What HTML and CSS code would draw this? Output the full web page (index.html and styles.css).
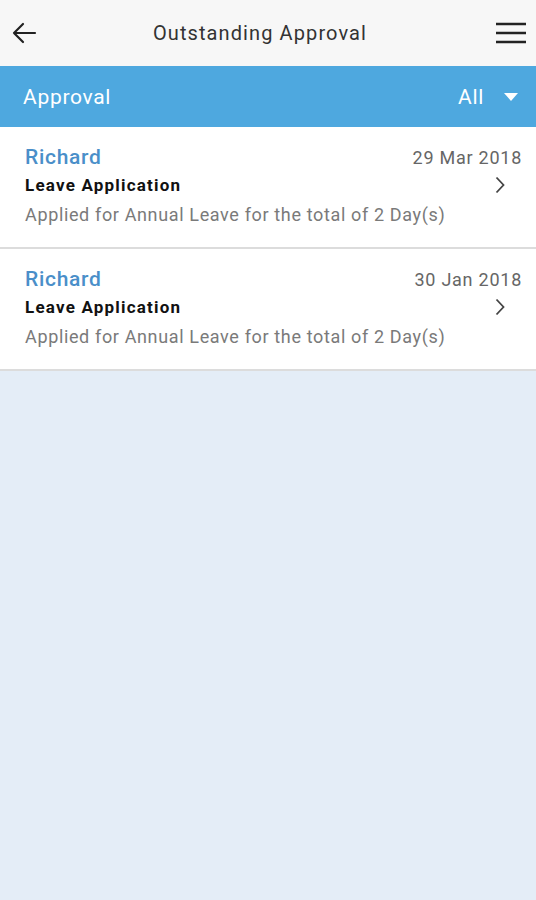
FILE: index.html
```html
<!DOCTYPE html>
<html>
<head>
<meta charset="utf-8">
<link rel="stylesheet" href="styles.css">
</head>
<body>
<div class="app">
  <header class="topbar">
    <button class="icon-btn back" aria-label="Back">
      <svg width="28" height="28" viewBox="0 0 28 28"><path d="M25 14H4M13 5l-9 9 9 9" fill="none" stroke="#222" stroke-width="2.2" stroke-linecap="round" stroke-linejoin="round"/></svg>
    </button>
    <h1 class="title">Outstanding Approval</h1>
    <button class="icon-btn menu" aria-label="Menu">
      <svg width="30" height="22" viewBox="0 0 30 22"><path d="M0 2h30M0 11h30M0 20h30" stroke="#222" stroke-width="2.6"/></svg>
    </button>
  </header>
  <div class="filterbar">
    <span class="filter-label">Approval</span>
    <span class="filter-select">All <svg class="caret" width="14" height="8" viewBox="0 0 14 8"><path d="M0 0h14L7 8z" fill="#fff"/></svg></span>
  </div>
  <ul class="list">
    <li class="item">
      <div class="item-top">
        <span class="name">Richard</span>
        <span class="date">29 Mar 2018</span>
      </div>
      <div class="item-mid">
        <span class="type">Leave Application</span>
        <svg class="chev" width="10" height="18" viewBox="0 0 10 18"><path d="M1.5 1.5l7 7.5-7 7.5" fill="none" stroke="#444" stroke-width="1.8"/></svg>
      </div>
      <div class="desc">Applied for Annual Leave for the total of 2 Day(s)</div>
    </li>
    <li class="item">
      <div class="item-top">
        <span class="name">Richard</span>
        <span class="date">30 Jan 2018</span>
      </div>
      <div class="item-mid">
        <span class="type">Leave Application</span>
        <svg class="chev" width="10" height="18" viewBox="0 0 10 18"><path d="M1.5 1.5l7 7.5-7 7.5" fill="none" stroke="#444" stroke-width="1.8"/></svg>
      </div>
      <div class="desc">Applied for Annual Leave for the total of 2 Day(s)</div>
    </li>
  </ul>
</div>
</body>
</html>
```
FILE: styles.css
```css
* { box-sizing: border-box; }
html, body { margin: 0; padding: 0; }
body {
  font-family: Roboto, "Noto Sans", "Liberation Sans", sans-serif;
  background: #e4edf7;
  width: 536px;
  min-height: 900px;
}
.app { display: flex; flex-direction: column; }
.topbar {
  height: 66px;
  background: #f7f7f7;
  display: flex;
  align-items: center;
  justify-content: space-between;
  padding: 0 10px 0 10px;
}
.icon-btn {
  border: 0;
  background: none;
  padding: 0;
  display: flex;
  align-items: center;
}
.back { width: 30px; }
.menu { width: 30px; }
.title {
  margin: 0 16px 0 0;
  font-weight: 400;
  font-size: 20px;
  color: #333;
  letter-spacing: 1.1px;
}
.filterbar {
  height: 61px;
  background: #4ea8df;
  display: flex;
  align-items: center;
  justify-content: space-between;
  padding: 0 18px 0 23px;
  color: #fff;
  font-size: 21px;
  letter-spacing: 0.7px;
}
.filter-select { display: flex; align-items: center; gap: 20px; }
.caret { margin-top: 1px; }
.list { list-style: none; margin: 0; padding: 0; }
.item {
  background: #fff;
  padding: 18px 14px 0 25px;
  height: 122px;
  border-bottom: 2px solid #dcdcdc;
}
.item-top {
  display: flex;
  justify-content: space-between;
  align-items: baseline;
  height: 24px;
}
.name {
  color: #4a8fc9;
  font-weight: 500;
  font-size: 21px;
  letter-spacing: 0.7px;
}
.date {
  color: #666;
  font-size: 18px;
  letter-spacing: 0.75px;
}
.item-mid {
  display: flex;
  justify-content: space-between;
  align-items: center;
  height: 32px;
  padding-right: 17px;
}
.type {
  font-weight: 700;
  font-size: 17px;
  color: #111;
  letter-spacing: 1.2px;
}
.desc {
  font-size: 18px;
  color: #7a7a7a;
  letter-spacing: 0.64px;
  margin-top: 3px;
}
```
